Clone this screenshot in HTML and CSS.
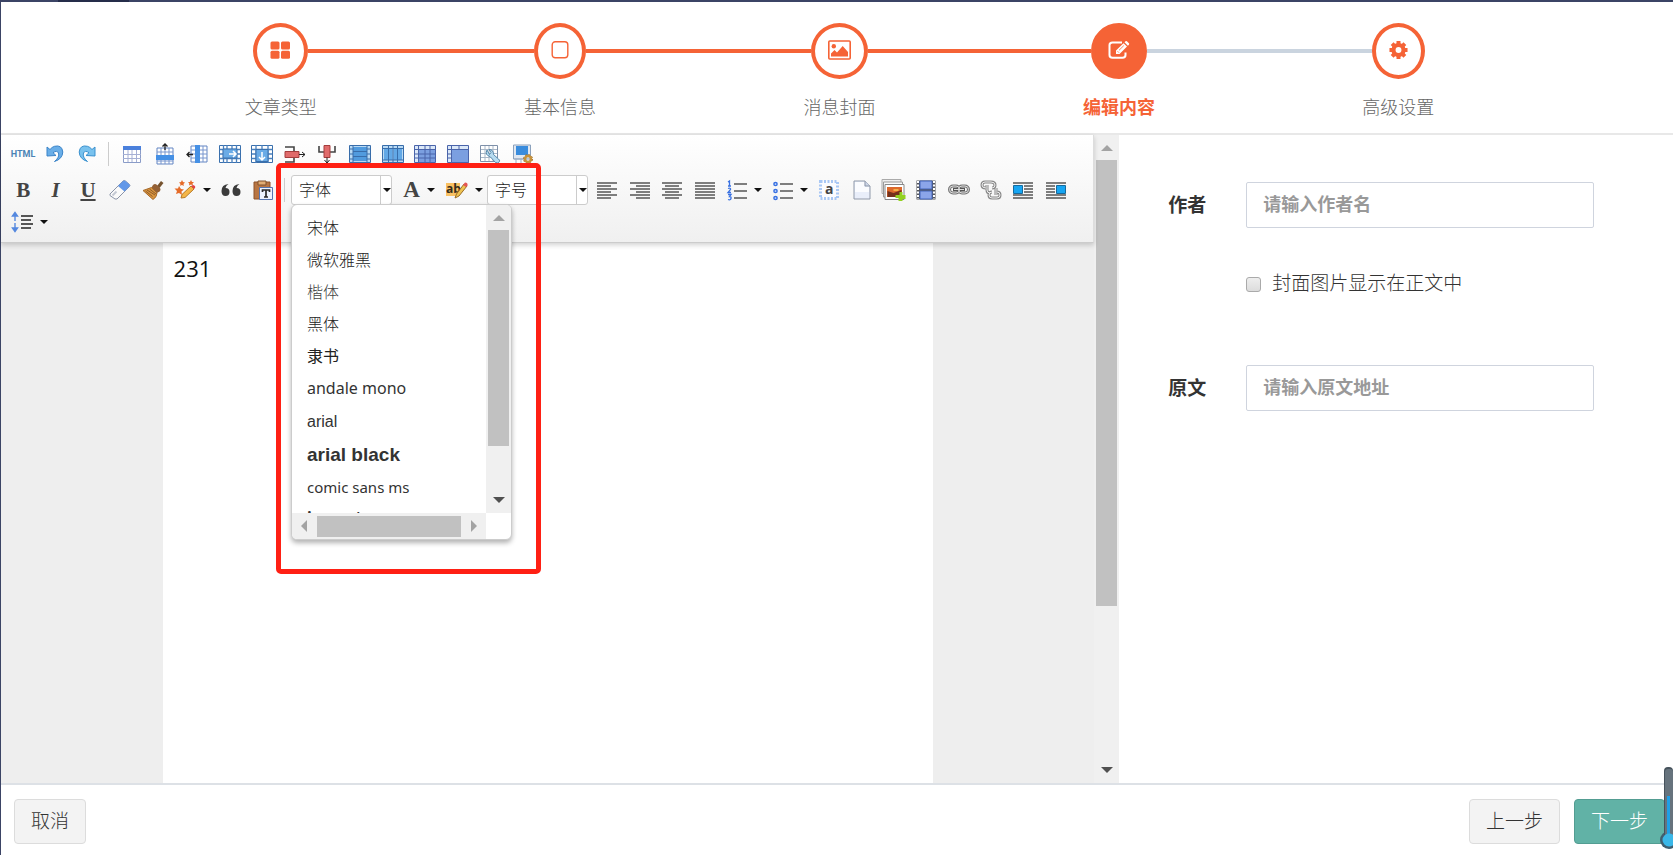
FILE: index.html
```html
<!DOCTYPE html>
<html lang="zh-CN">
<head>
<meta charset="utf-8">
<title>编辑内容</title>
<link rel="stylesheet" href="styles.css">
</head>
<body>
<div class="topbar"><span class="topbar-tab"></span></div>
<div class="app">
  <header class="steps">
    <div class="step done first">
      <div class="step-track"><span class="circle"><svg width="21" height="18" viewBox="0 0 21 18" fill="currentColor"><rect x="0.5" y="0.5" width="9" height="8" rx="1.5"/><rect x="11" y="0.5" width="9" height="8" rx="1.5"/><rect x="0.5" y="9.8" width="9" height="8" rx="1.5"/><rect x="11" y="9.8" width="9" height="8" rx="1.5"/></svg></span></div>
      <span class="step-name">文章类型</span>
    </div>
    <div class="step done">
      <div class="step-track"><span class="circle"><svg width="18" height="18" viewBox="0 0 18 18" fill="none" stroke="currentColor" stroke-width="1.4"><rect x="1.2" y="0.8" width="15.6" height="16" rx="3"/></svg></span></div>
      <span class="step-name">基本信息</span>
    </div>
    <div class="step done">
      <div class="step-track"><span class="circle"><svg width="23" height="20" viewBox="0 0 23 20"><rect x="0.8" y="1" width="21.4" height="18" rx="1" fill="none" stroke="currentColor" stroke-width="1.6"/><circle cx="5.8" cy="6.3" r="2.2" fill="currentColor"/><path d="M3 16.5v-3l3.500-3.500 2.500 2.500 5.700-6.500 5.300 6v4.500z" fill="currentColor"/></svg></span></div>
      <span class="step-name">消息封面</span>
    </div>
    <div class="step current">
      <div class="step-track"><span class="circle"><svg width="22" height="18" viewBox="0 0 22 18"><path d="M14 1.500H4.500Q1.500 1.500 1.500 4v10q0 2.800 3 2.800h10q3 0 3-2.800v-2.500" fill="none" stroke="currentColor" stroke-width="2"/><path d="M8 13V9.500L15.500 2.200l3.500 3.400L11.500 13zM16.500 1.300l1-1q.7-.5 1.400 0l2 2q.6.700 0 1.400l-1 1z" fill="currentColor"/><path d="M9.500 10.200l1.500 1.500M11 9.300l4.800-4.700" stroke="#f56336" stroke-width=".8"/></svg></span></div>
      <span class="step-name">编辑内容</span>
    </div>
    <div class="step last">
      <div class="step-track"><span class="circle"><svg width="19" height="20" viewBox="0 0 20 20"><circle cx="10" cy="10" r="5.300" fill="none" stroke="currentColor" stroke-width="4.400"/><g stroke="currentColor" stroke-width="4.200"><path d="M10 .5v4M10 15.500v4M.5 10h4M15.500 10h4M3.300 3.300l2.800 2.800M13.900 13.900l2.800 2.800M3.300 16.700l2.800-2.800M13.900 6.100l2.800-2.800"/></g></svg></span></div>
      <span class="step-name">高级设置</span>
    </div>
  </header>

  <main class="main">
    <section class="editor">
      <div class="editor-body">
        <div class="toolbar">
          <div class="tool-row">
            <div class="group g3">
              <button class="tool html" type="button">HTML</button>
              <button class="tool" type="button" aria-label="撤销"><svg viewBox="0 0 20 20"><path d="M2 3v9l9-.5-3-2.800q4-2.800 5.500.3 1.300 4.200-4 8.500 8-2.500 8.300-9.500Q17 .5 9.500 2.300 7 3 5 5.500z" fill="#69aee8" stroke="#3a83c8"/></svg></button>
              <button class="tool" type="button" aria-label="重做"><svg viewBox="0 0 20 20"><path d="M18 3v9l-9-.5 3-2.800q-4-2.800-5.500.3-1.300 4.200 4 8.500-8-2.500-8.300-9.500Q3 .5 10.500 2.300 13 3 15 5.500z" fill="#79c2ee" stroke="#3a91cf"/></svg></button>
            </div>
            <span class="sep"></span>
            <div class="group g13">
              <button class="tool" type="button" aria-label="插入表格"><svg viewBox="0 0 20 20"><path d="M1.500 2.500h17v16h-17z" fill="#fff" stroke="#8a9cc8"/><path d="M1 2h18v4H1z" fill="#4a80dc"/><path d="M1 10.500h18M1 14.500h18M6 6v12M10 6v12M14.500 6v12" stroke="#a6b0d4"/></svg></button>
              <button class="tool" type="button" aria-label="插入行"><svg class="tall" viewBox="0 0 20 22"><path d="M2 5h16v16H2z" fill="#fff" stroke="#6385c3"/><path d="M2 9h16M2 18h16M6 5v16M10 5v16M14 5v16" stroke="#7896ce"/><path d="M1 12h18v5H1z" fill="#4590e5"/><path d="M10 7V1M7.500 3.500L10 1l2.500 2.500" fill="none" stroke="#222" stroke-width="1.300"/></svg></button>
              <button class="tool" type="button" aria-label="插入列"><svg class="wide" viewBox="0 0 22 20"><path d="M5 2h16v16H5z" fill="#fff" stroke="#6385c3"/><path d="M5 6h16M5 10h16M5 14h16M17 2v16" stroke="#7896ce"/><path d="M9 1h5v18H9z" fill="#4590e5"/><path d="M7 10.500H1M3.500 8L1 10.500 3.500 13" fill="none" stroke="#222" stroke-width="1.300"/></svg></button>
              <button class="tool" type="button" aria-label="向右合并"><svg class="wide" viewBox="0 0 22 20"><path d="M.5 1.500h21v17H.5z" fill="#fff" stroke="#3a70ad"/><path d="M.5 5.500h21M.5 14.500h21M4.500 1v18M17.500 1v18M8 1v4M13 1v4M8 15v4M13 15v4M1 10h3M18 10h3" stroke="#4a80bd" stroke-width="1.300"/><path d="M4 5h14v9H4z" fill="#6aabe6" stroke="#3a70ad"/><path d="M10 10h7M14 7l3 3-3 3" fill="none" stroke="#fff" stroke-width="1.500"/></svg></button>
              <button class="tool" type="button" aria-label="向下合并"><svg class="wide" viewBox="0 0 22 20"><path d="M.5 1.500h21v17H.5z" fill="#fff" stroke="#3a70ad"/><path d="M.5 5.500h21M.5 14.500h21M5 1v18M17 1v18M11 1v4M1 10h4M17 10h4" stroke="#4a80bd" stroke-width="1.300"/><path d="M5 5.500h12v12H5z" fill="#6aabe6" stroke="#3a70ad"/><path d="M11 8v8M8 13l3 3 3-3" fill="none" stroke="#fff" stroke-width="1.500"/></svg></button>
              <button class="tool" type="button" aria-label="删除行"><svg class="wide" viewBox="0 0 22 20"><path d="M1 3h9v4M1 18h9v-4" fill="none" stroke="#444" stroke-width="1.600"/><path d="M1 7.500h14v6H1z" fill="#e06b6b" stroke="#a53d3d"/><path d="M15 10.500h6M18 8l3 2.500-3 2.500" fill="none" stroke="#222"/></svg></button>
              <button class="tool" type="button" aria-label="删除列"><svg viewBox="0 0 20 20"><path d="M2 2v6h5M18 2v6h-5" fill="none" stroke="#444" stroke-width="1.600"/><path d="M7 1.500h6v12H7z" fill="#e06b6b" stroke="#a53d3d"/><path d="M10 13.500V19M7.500 16l2.500 3 2.500-3" fill="none" stroke="#222"/></svg></button>
              <button class="tool" type="button" aria-label="拆分行"><svg class="wide" viewBox="0 0 22 20"><path d="M.5 1.500h21v17H.5z" fill="#b9daf4" stroke="#386daa"/><path d="M4 3h14v4H4zM4 8h14v4H4zM4 13h14v4H4z" fill="#519bde"/><path d="M4 1v18M18 1v18M1 5h3M1 10h3M1 15h3M18 5h3M18 10h3M18 15h3M4 7.500h14M4 12.500h14" stroke="#386daa"/></svg></button>
              <button class="tool" type="button" aria-label="拆分列"><svg class="wide" viewBox="0 0 22 20"><path d="M.5 1.500h21v17H.5z" fill="#b9daf4" stroke="#386daa"/><path d="M2 5h4v11H2zM7 5h3.500v11H7zM11.500 5H15v11h-3.500zM16 5h4v11h-4z" fill="#62a8e6"/><path d="M1 4.500h20M1 16h20M6.500 1v18M11 1v18M15.500 1v18" stroke="#386daa"/></svg></button>
              <button class="tool" type="button" aria-label="完全拆分"><svg class="wide" viewBox="0 0 22 20"><path d="M.5 1.500h21v17H.5z" fill="#dbe8f8" stroke="#4a64aa"/><path d="M5 6h16v12H5z" fill="#7b9fe0"/><path d="M1 5.500h20M4.500 1v18M11 1v18M16 1v18M1 10h20M1 14h20" stroke="#4a64aa"/></svg></button>
              <button class="tool" type="button" aria-label="合并单元格"><svg class="wide" viewBox="0 0 22 20"><path d="M.5 1.500h21v17H.5z" fill="#dbe8f8" stroke="#4a64aa"/><path d="M4.500 5.500h17v13h-17z" fill="#7b9fe0" stroke="#4a64aa"/><path d="M4.500 1v4M12 1v4M1 5.500h4M1 10h3M1 14h3" stroke="#4a64aa"/></svg></button>
              <button class="tool" type="button" aria-label="表格属性"><svg viewBox="0 0 20 20"><path d="M.5 1.500h17v16H.5z" fill="#fff" stroke="#7e90a9"/><path d="M1 5.500h16M1 9.500h16M1 13.500h16M5 2v15M9 2v15M13 2v15" stroke="#a9b7c7"/><path d="M7 6q-2.500 5 3 6.500l5.500 6q2.500 1.500 4-1 .500-1.500-1-2.500l-5-4.500q0-5-4.500-5l2 3-1.500 2z" fill="#b6dbf0" stroke="#5788aa"/></svg></button>
              <button class="tool" type="button" aria-label="单元格属性"><svg viewBox="0 0 20 20"><path d="M.5 1h17v14H.5z" fill="#e0e7f1" stroke="#8ba1bc"/><path d="M3 2h12v9H3z" fill="#398cdd"/><path d="M3 15v4M8 15v4M1 15h12" stroke="#9cadc3"/><circle cx="15" cy="15" r="3" fill="none" stroke="#c7923a" stroke-width="2.500"/><circle cx="15" cy="15" r="4.500" fill="none" stroke="#a9762a" stroke-dasharray="2 1.500"/></svg></button>
            </div>
          </div>
          <div class="tool-row">
            <div class="group g5">
              <button class="tool serif" type="button" aria-label="加粗"><b>B</b></button>
              <button class="tool serif" type="button" aria-label="斜体"><b><i>I</i></b></button>
              <button class="tool serif" type="button" aria-label="下划线"><u>U</u></button>
              <button class="tool" type="button" aria-label="清除格式"><svg class="wide" viewBox="0 0 22 20"><path d="M1 14L14 1q1-1 2.500 0l4 3.500q1 1 0 2L8 19H6l-5-3.500z" fill="#fafafa" stroke="#8b94a8"/><path d="M9 6l5-5q1-1 2.500 0l4 3.500q1 1 0 2l-5 5z" fill="#6398e8"/><path d="M3.500 15.500l4-4" stroke="#c4c9d4" stroke-width="2"/></svg></button>
              <button class="tool" type="button" aria-label="格式刷"><svg class="wide" viewBox="0 0 22 20"><path d="M15 6l4-5 2.500 2-4 5z" fill="#76532f"/><path d="M11 5q2-2 4 0l2.500 2.500q2 2 0 4L15 13 9.500 7.500z" fill="#946136"/><path d="M9.500 7.500L15 13q0 4-4 6.500L1 10.500z" fill="#d9943e" stroke="#a66a2b"/><path d="M5 10l8 5M3.500 11l7 5.500M7.500 9l6.500 5" stroke="#7e4f25" stroke-width=".8"/></svg></button>
            </div>
            <button class="tool split" type="button" aria-label="自动排版"><svg class="wide" viewBox="0 0 22 20"><path d="M5 6l2 3 3 .5-2.500 2L8 15l-3-2-3 1 1-3-2.500-2.500H4zM8 0l1 2 2 .500-1.500 1.500.300 2L8 5l-2 .800L6.500 4 5 2.500 7 2zM17 0l1 2h2l-1.500 1.600.500 2-2-1-2 1 .300-2L14 2h2z" fill="#e56b28"/><path d="M7 18l1-3.500L17 6l3 3-9 8.500z" fill="#f5b647" stroke="#b87a28"/><path d="M17 6l2-1q3 1 2 3l-1 1z" fill="#e44343"/></svg><span class="caret"></span></button>
            <div class="group g2">
              <button class="tool" type="button" aria-label="引用"><svg viewBox="0 0 20 14"><path d="M7.500 1Q.5 1.500.5 8q0 5 4 5t4-4-4-4q.5-2.500 3-4zM18.500 1q-7 .500-7 7 0 5 4 5t4-4-4-4q.5-2.500 3-4z" fill="#3b3b3b"/></svg></button>
              <button class="tool" type="button" aria-label="纯文本粘贴"><svg viewBox="0 0 20 20"><path d="M1 2h16v17H1z" fill="#b87542" stroke="#8c532b"/><path d="M5 1h8v4H5z" fill="#e2ac73" stroke="#80502d"/><path d="M6.500 7.500h13v12h-13z" fill="#edf3ff" stroke="#5675b0"/><path d="M9.500 12v-2h7v2M13 10v7M11 17h4" fill="none" stroke="#292929" stroke-width="1.700"/></svg></button>
            </div>
            <span class="sep"></span>
            <div class="combo">
              <select class="combo-select" aria-label="字体"><option>字体</option></select>
              <span class="combo-arrow"><span class="caret"></span></span>
              <div class="dropdown">
                <ul class="font-list" role="listbox" aria-label="字体列表">
                  <li role="option">宋体</li>
                  <li role="option">微软雅黑</li>
                  <li role="option" class="kai">楷体</li>
                  <li role="option">黑体</li>
                  <li role="option" class="li">隶书</li>
                  <li role="option" class="latin">andale mono</li>
                  <li role="option" class="latin arial">arial</li>
                  <li role="option" class="latin black">arial black</li>
                  <li role="option" class="latin comic">comic sans ms</li>
                  <li role="option" class="latin impact">impact</li>
                </ul>
                <div class="vbar"><span class="arrow up"></span><span class="thumb drop-thumb"></span><span class="arrow down"></span></div>
                <div class="hbar"><span class="arrow left"></span><span class="thumb"></span><span class="arrow right"></span></div>
              </div>
              <span class="highlight"></span>
            </div>
            <button class="tool split serif color" type="button" aria-label="字体颜色"><b>A</b><span class="caret"></span></button>
            <button class="tool split" type="button" aria-label="背景色"><svg class="wide" viewBox="0 0 22 20"><path d="M0 3h14v13H0z" fill="#f9c163"/><text x="0" y="13" class="ab">ab</text><path d="M9 18l1.500-4L18 4l3 2-8 10z" fill="#eec351" stroke="#9b6c26"/><path d="M17 5l2-2.500q3 0 2.500 3L20 7z" fill="#e45555"/></svg><span class="caret"></span></button>
            <div class="combo">
              <select class="combo-select" aria-label="字号"><option>字号</option></select>
              <span class="combo-arrow"><span class="caret"></span></span>
            </div>
            <div class="group g4">
              <button class="tool" type="button" aria-label="左对齐"><svg viewBox="0 0 20 20"><path d="M0 3h20M0 9h20M0 15h20M0 6h14M0 12h14M0 18h14" stroke="#555" stroke-width="1.400"/></svg></button>
              <button class="tool" type="button" aria-label="右对齐"><svg viewBox="0 0 20 20"><path d="M0 3h20M0 9h20M0 15h20M6 6h14M6 12h14M6 18h14" stroke="#555" stroke-width="1.400"/></svg></button>
              <button class="tool" type="button" aria-label="居中对齐"><svg viewBox="0 0 20 20"><path d="M0 3h20M0 9h20M0 15h20M3 6h14M3 12h14M3 18h14" stroke="#555" stroke-width="1.400"/></svg></button>
              <button class="tool" type="button" aria-label="两端对齐"><svg viewBox="0 0 20 20"><path d="M0 3h20M0 6h20M0 9h20M0 12h20M0 15h20M0 18h20" stroke="#555" stroke-width="1.400"/></svg></button>
            </div>
            <button class="tool split" type="button" aria-label="有序列表"><svg viewBox="0 0 20 20"><path d="M7 4h13M7 11h13M7 18h13" stroke="#555" stroke-width="1.500"/><path d="M1 2l1.500-1v5M1 6h3M1 8.500q3-1 2.500 1L1 12.500h3M1 14.500h3l-1.500 2q2 0 1.500 2t-3 1" fill="none" stroke="#3971e2" stroke-width="1.300"/></svg><span class="caret"></span></button>
            <button class="tool split" type="button" aria-label="无序列表"><svg viewBox="0 0 20 20"><path d="M7 4h13M7 11h13M7 18h13" stroke="#555" stroke-width="1.500"/><g fill="#dce9ff" stroke="#3971e2" stroke-width="1.500"><circle cx="2.500" cy="4" r="1.600"/><circle cx="2.500" cy="11" r="1.600"/><circle cx="2.500" cy="18" r="1.600"/></g></svg><span class="caret"></span></button>
            <div class="group g8">
              <button class="tool" type="button" aria-label="全选"><svg viewBox="0 0 20 20"><rect x="1.500" y="1.500" width="17" height="17" fill="#fbfcff" stroke="#a9c8f5" stroke-width="3" stroke-dasharray="2 1.500"/><text x="6" y="14" class="all">a</text></svg></button>
              <button class="tool" type="button" aria-label="清空文档"><svg viewBox="0 0 20 20"><path d="M2 1h11l5 5v13H2z" fill="#e9eefa" stroke="#9099a9"/><path d="M3 2h9v5h5v5H3z" fill="#fbfcff"/><path d="M13 1v5h5" fill="#ccd5e8" stroke="#9099a9"/></svg></button>
              <button class="tool" type="button" aria-label="多图上传"><svg class="big" viewBox="0 0 24 22"><path d="M.5.500h19v14H.5z" fill="#eee" stroke="#aaa"/><path d="M2 3h19v15H2z" fill="#f8f8f8" stroke="#999"/><path d="M3.500 5.500h19v15h-19z" fill="#fff" stroke="#888"/><path d="M5.500 8h15v10h-15z" fill="#dc692c"/><path d="M6 12l6 2 8-3v7H6z" fill="#75311b"/><path d="M12 10h5v2h-5z" fill="#f5af46"/><path d="M18 13h3v3h3v4h-3v2h-4v-3h-3v-3h4z" fill="#92d121"/></svg></button>
              <button class="tool" type="button" aria-label="视频"><svg viewBox="0 0 20 20"><path d="M.5.500h19v19H.5z" fill="#54565c"/><path d="M4 1h12v8H4zM4 11h12v8H4z" fill="#8ba5e9" stroke="#4264ba"/><path d="M2 1v18M18 1v18" stroke="#fff" stroke-width="2" stroke-dasharray="2 1.500"/></svg></button>
              <button class="tool" type="button" aria-label="超链接"><svg class="wide" viewBox="0 0 22 20"><g fill="none" stroke="#777" stroke-width="3"><rect x="1.500" y="6" width="10" height="7" rx="3.500"/><rect x="10.500" y="6" width="10" height="7" rx="3.500"/></g><path d="M5 9.500h12" stroke="#555" stroke-width="3.500"/><g fill="none" stroke="#ddd"><rect x="1.500" y="6" width="10" height="7" rx="3.500"/><rect x="10.500" y="6" width="10" height="7" rx="3.500"/><path d="M6 9.500h10"/></g></svg></button>
              <button class="tool" type="button" aria-label="取消链接"><svg viewBox="0 0 20 20"><g fill="none" stroke="#888" stroke-width="3"><path d="M5 8q-4 0-4-3t3-3h6q4 0 4 3t-3 3M6 5v5q0 3 3 3M16 12q3 0 3 3t-3 3h-5q-3 0-3-3t3-3M15 8v7"/></g><g fill="none" stroke="#eee"><path d="M5 8q-4 0-4-3t3-3h6q4 0 4 3t-3 3M6 5v5q0 3 3 3M16 12q3 0 3 3t-3 3h-5q-3 0-3-3t3-3M15 8v7"/></g></svg></button>
              <button class="tool" type="button" aria-label="左浮动"><svg viewBox="0 0 20 20"><path d="M0 3h20M11 6h9M11 9h9M11 12h9M0 15h20M0 18h20" stroke="#555" stroke-width="1.400"/><path d="M.5 5.500h9v8h-9z" fill="#16a5f2" stroke="#176a9c"/></svg></button>
              <button class="tool" type="button" aria-label="右浮动"><svg viewBox="0 0 20 20"><path d="M0 3h20M0 6h9M0 9h9M0 12h9M0 15h20M0 18h20" stroke="#555" stroke-width="1.400"/><path d="M10.500 5.500h9v8h-9z" fill="#16a5f2" stroke="#176a9c"/></svg></button>
            </div>
          </div>
          <div class="tool-row short">
            <button class="tool split line" type="button" aria-label="行间距"><svg class="wide" viewBox="0 0 22 20"><path d="M4 9V1M1.500 4L4 .5 6.500 4zM4 11v8M1.500 16L4 19.500 6.500 16z" fill="#5488df" stroke="#5488df" stroke-width="1.400"/><path d="M10 4h12M10 8h10M10 12h12M10 16h10" stroke="#222" stroke-width="1.600"/></svg><span class="caret"></span></button>
          </div>
        </div>
        <div class="canvas"><article class="paper" contenteditable="true">231</article></div>
      </div>
      <div class="vbar page-bar"><span class="arrow up"></span><span class="thumb page-thumb"></span><span class="arrow down"></span></div>
    </section>

    <form class="side">
      <div class="field">
        <label for="author">作者</label>
        <input class="text" id="author" type="text" placeholder="请输入作者名">
      </div>
      <div class="check">
        <input id="cover" type="checkbox">
        <label for="cover">封面图片显示在正文中</label>
      </div>
      <div class="field">
        <label for="source">原文</label>
        <input class="text" id="source" type="text" placeholder="请输入原文地址">
      </div>
    </form>
  </main>

  <footer class="footer">
    <button class="btn" type="button">取消</button>
    <span class="spacer"></span>
    <button class="btn" type="button">上一步</button>
    <button class="btn primary" type="button">下一步</button>
  </footer>
</div>
<svg class="meter" width="14" height="84" viewBox="0 0 14 84"><circle cx="10" cy="73" r="9" fill="#3f5e70"/><rect x="5" y="0" width="9" height="76" rx="4" fill="#46525c"/><rect x="6" y="2" width="8" height="70" rx="3" fill="#66737d"/><path d="M8 29h3v40H8z" fill="#1f9fe6"/><circle cx="10" cy="73" r="6.500" fill="#3ab7e8"/></svg>
</body>
</html>
```

FILE: styles.css
```css
* { box-sizing: border-box; }

body {
  margin: 0;
  height: 100vh;
  display: flex;
  flex-direction: column;
  overflow: hidden;
  background: #fff;
  color: #333;
  font-family: "Open Sans", "Noto Sans CJK SC", sans-serif;
  font-size: 19px;
}

button, input, select { font-family: inherit; }

.topbar { height: 2px; background: #3b4465; flex: none; }
.topbar-tab { display: block; width: 71px; height: 2px; margin-left: 58px; background: #252d4a; }

.app {
  flex: 1;
  min-height: 0;
  display: flex;
  flex-direction: column;
  border-left: 1px solid #3b4465;
}

/* Steps */
.steps {
  flex: none;
  display: flex;
  padding: 21px 135px 14px 140px;
  border-bottom: 2px solid #e8e8e8;
}
.step { flex: 1; display: flex; flex-direction: column; align-items: center; gap: 16px; }
.step-track { align-self: stretch; display: flex; align-items: center; }
.step-track::before, .step-track::after { content: ""; flex: 1; height: 4px; background: #f56336; }
.first .step-track::before, .last .step-track::after { background: transparent; }
.current .step-track::after, .last .step-track::before { background: #cad4df; }
.circle {
  display: flex;
  align-items: center;
  height: 56px;
  padding: 0 13px 2px;
  border: 4px solid #f56336;
  border-radius: 50%;
  color: #f56336;
}
.current .circle { background: #f56336; color: #fff; }
.step-name { font-size: 18px; line-height: 24px; color: #666; font-weight: 300; }
.current .step-name { color: #f56336; font-weight: 700; }

/* Main */
.main { flex: 1; min-height: 0; display: flex; }
.editor { flex: none; width: calc(67% - 2px); display: flex; }
.editor-body { flex: 1; min-width: 0; display: flex; flex-direction: column; background: #eee; }
.toolbar {
  position: relative;
  z-index: 2;
  padding: 1px 0 6px 6px;
  border-bottom: 1px solid #ccc;
  border-right: 1px solid #ddd;
  background: linear-gradient(#fff, #f0f0f0);
  box-shadow: 0 2px 5px rgba(0, 0, 0, .18);
}
.tool-row { display: flex; align-items: center; height: 36px; }
.tool-row.short { height: 28px; }
.group { display: flex; flex: none; }
.g2 { width: 64px; }
.g3 { width: 96px; }
.g4 { width: 130px; margin-left: 3px; }
.g5 { width: 162px; }
.g8 { width: 259px; }
.g13 { width: 423px; margin-left: 1px; }
.tool {
  flex: 1;
  display: flex;
  align-items: center;
  justify-content: center;
  height: 26px;
  padding: 0;
  border: 0;
  background: none;
  color: #444;
}
.tool svg { width: 20px; height: 20px; flex: none; overflow: visible; }
.tool svg.wide { width: 22px; }
.tool svg.tall { height: 22px; }
.tool svg.big { width: 25px; height: 22px; }
.html { font-family: Roboto, sans-serif; font-size: 9px; font-weight: 700; color: #4b83b5; }
.serif { font-family: "Liberation Serif", serif; font-size: 21px; color: #444; }
.serif u { font-weight: 700; }
.split { flex: none; width: 46px; gap: 7px; }
.color { width: 42px; margin: 0 1px 0 6px; font-size: 23px; }
.line { width: 44px; }
.ab { font: 700 12px "Open Sans", sans-serif; fill: #332b1c; }
.all { font: 700 14px "Open Sans", sans-serif; fill: #444; }
.sep { width: 1px; height: 24px; margin: 0 6px 0 5px; background: #ccc; }
.caret {
  width: 0;
  height: 0;
  border: 4px solid transparent;
  border-top-color: #111;
  border-bottom: 0;
}

.combo { position: relative; flex: none; display: flex; width: 101px; height: 30px; }
.combo-select {
  appearance: none;
  width: 100%;
  padding: 0 0 0 7px;
  border: 1px solid #ccc;
  border-radius: 3px;
  background: #fff;
  color: #222;
  font-size: 16px;
  font-weight: 300;
}
.combo-arrow {
  position: absolute;
  right: 0;
  top: 1px;
  bottom: 1px;
  width: 12px;
  display: flex;
  align-items: center;
  justify-content: center;
  border-left: 1px solid #ccc;
  pointer-events: none;
}

.dropdown {
  position: absolute;
  left: 0;
  top: 29px;
  z-index: 3;
  display: grid;
  grid-template-columns: 194px 25px;
  grid-template-rows: 308px 26px;
  border: 1px solid #ccc;
  border-radius: 6px;
  background: #fff;
  box-shadow: 0 3px 5px rgba(0, 0, 0, .3);
  overflow: hidden;
}
.font-list {
  margin: 0;
  padding: 7px 0 0 15px;
  list-style: none;
  overflow: hidden;
  color: #222;
  font-size: 16px;
  font-weight: 300;
}
.font-list li { height: 32px; line-height: 32px; white-space: nowrap; }
.font-list .kai { color: #444; }
.font-list .li { font-weight: 400; }
.font-list .latin { height: 33px; line-height: 33px; color: #333; font-weight: 400; font-family: "Noto Sans", sans-serif; }
.font-list .arial { font-family: "Liberation Sans", sans-serif; }
.font-list .black { font-family: "Liberation Sans", sans-serif; font-size: 19px; font-weight: 700; }
.font-list .comic { font-size: 15px; }
.font-list .impact { font-weight: 700; line-height: 27px; }
.highlight {
  position: absolute;
  left: -15px;
  top: -12px;
  z-index: 4;
  width: 265px;
  height: 411px;
  border: 5px solid #ff2014;
  border-radius: 5px;
  pointer-events: none;
}

/* Scroll bars */
.vbar, .hbar { display: flex; align-items: center; background: #f0f0f0; }
.vbar { flex-direction: column; width: 25px; padding: 10px 0; justify-content: space-between; }
.hbar { padding: 0 9px; justify-content: space-between; }
.thumb { background: #c1c1c1; }
.drop-thumb { width: 21px; height: 216px; margin: 9px 0 auto; }
.page-bar { flex: none; }
.page-thumb { width: 21px; height: 71%; margin: 9px 0 auto; }
.hbar .thumb { height: 21px; width: 144px; margin-right: auto; margin-left: 10px; }
.arrow { width: 0; height: 0; border: 6px solid transparent; }
.arrow.up { border-top: 0; border-bottom-color: #a3a3a3; }
.arrow.down { border-bottom: 0; border-top-color: #505050; }
.arrow.left { border-left: 0; border-right-color: #a3a3a3; }
.arrow.right { border-right: 0; border-left-color: #a3a3a3; }

.canvas { flex: 1; display: flex; justify-content: center; }
.paper { width: 770px; padding: 10px 11px; background: #fff; font-size: 22px; line-height: 30px; color: #111; }

/* Settings form */
.side { flex: 1; padding: 47px 79px 0 49px; }
.field { display: flex; align-items: center; }
.field label { width: 78px; padding-bottom: 2px; font-weight: 700; }
.text {
  flex: 1;
  min-width: 0;
  height: 46px;
  padding: 0 16px 2px;
  border: 1px solid #cfd4de;
  border-radius: 2px;
  font-size: 18px;
  color: #333;
}
.text::placeholder { color: #999; font-weight: 700; opacity: 1; }
.check { display: flex; align-items: center; gap: 11px; padding: 41px 0 68px 78px; font-weight: 300; line-height: 28px; }
.check input {
  appearance: none;
  width: 15px;
  height: 15px;
  margin: 2px 0 0;
  border: 1px solid #aaa;
  border-radius: 3px;
  background: linear-gradient(#eee, #dcdcdc);
}

/* Footer */
.footer {
  flex: none;
  display: flex;
  gap: 14px;
  padding: 14px 8px 11px 13px;
  border-top: 2px solid #dde1e6;
}
.spacer { flex: 1; }
.btn {
  height: 45px;
  padding: 0 16px 4px;
  border: 1px solid #dcdcdc;
  border-radius: 4px;
  background: #f3f3f3;
  color: #333;
  font-size: 19px;
  font-weight: 300;
}
.primary { border-color: #539d92; background: #61b2a6; color: #fff; }

.meter { position: fixed; right: 0; bottom: 4px; }
```
